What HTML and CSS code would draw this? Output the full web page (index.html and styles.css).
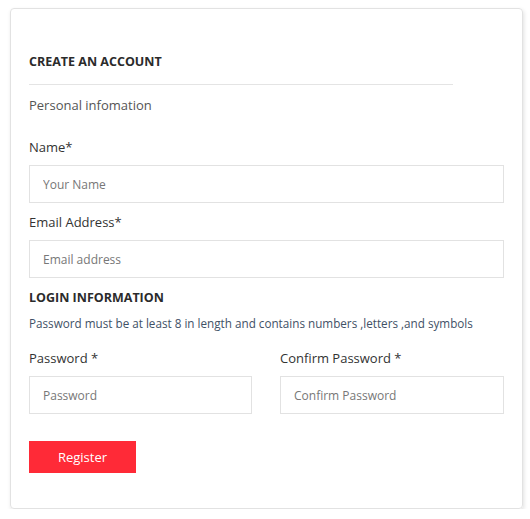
FILE: index.html
```html
<!DOCTYPE html>
<html>
<head>
<meta charset="utf-8">
<link rel="stylesheet" href="styles.css">
</head>
<body>
<div class="card">
  <h2 class="title">CREATE AN ACCOUNT</h2>
  <hr class="rule">
  <p class="sub">Personal infomation</p>
  <div class="field">
    <label class="label">Name*</label>
    <input class="input" type="text" placeholder="Your Name">
  </div>
  <div class="field">
    <label class="label">Email Address*</label>
    <input class="input" type="text" placeholder="Email address">
  </div>
  <h3 class="title title2">LOGIN INFORMATION</h3>
  <p class="note">Password must be at least 8 in length and contains numbers ,letters ,and symbols</p>
  <div class="row">
    <div class="field">
      <label class="label">Password *</label>
      <input class="input" type="password" placeholder="Password">
    </div>
    <div class="field">
      <label class="label">Confirm Password *</label>
      <input class="input" type="password" placeholder="Confirm Password">
    </div>
  </div>
  <button class="btn">Register</button>
</div>
</body>
</html>
```
FILE: styles.css
```css
* { box-sizing: border-box; }
body {
  margin: 0;
  padding: 8px 0 0 10px;
  background: #fff;
  font-family: "Open Sans", "Liberation Sans", sans-serif;
  color: #333;
}
.card {
  width: 513px;
  height: 501px;
  border: 1px solid #e2e2e2;
  border-radius: 4px;
  box-shadow: 1px 2px 4px rgba(0,0,0,0.12);
  padding: 45px 18px 0 18px;
  display: flex;
  flex-direction: column;
}
.title {
  margin: 0;
  font-size: 12.5px;
  font-weight: 700;
  line-height: 16px;
  color: #2b2b2b;
}
.rule {
  width: 424px;
  margin: 14px 0 0 0;
  border: 0;
  border-top: 1px solid #e4e4e4;
  height: 0;
}
.sub {
  margin: 11px 0 0 0;
  font-size: 13px;
  line-height: 18px;
  color: #555;
}
.field {
  display: flex;
  flex-direction: column;
}
.label {
  font-size: 13px;
  line-height: 18px;
  color: #333;
  margin-bottom: 9px;
}
.sub + .field { margin-top: 24px; }
.field + .field { margin-top: 10px; }
.input {
  width: 100%;
  height: 38px;
  border: 1px solid #e2e2e2;
  border-radius: 0;
  padding: 0 13px;
  font-family: inherit;
  font-size: 12px;
  color: #333;
  outline: none;
}
.input::placeholder { color: #777; }
.title2 { margin-top: 12px; }
.note {
  margin: 9px 0 0 0;
  font-size: 11.7px;
  line-height: 16px;
  color: #3f5166;
}
.row {
  margin-top: 18px;
  display: grid;
  grid-template-columns: 223px 224px;
  column-gap: 28px;
}
.row .field + .field { margin-top: 0; }
.btn {
  margin-top: 27px;
  width: 107px;
  height: 32px;
  background: #ff2a37;
  border: 0;
  border-radius: 0;
  color: #fff;
  font-family: inherit;
  font-size: 13px;
  padding: 0;
}
```
